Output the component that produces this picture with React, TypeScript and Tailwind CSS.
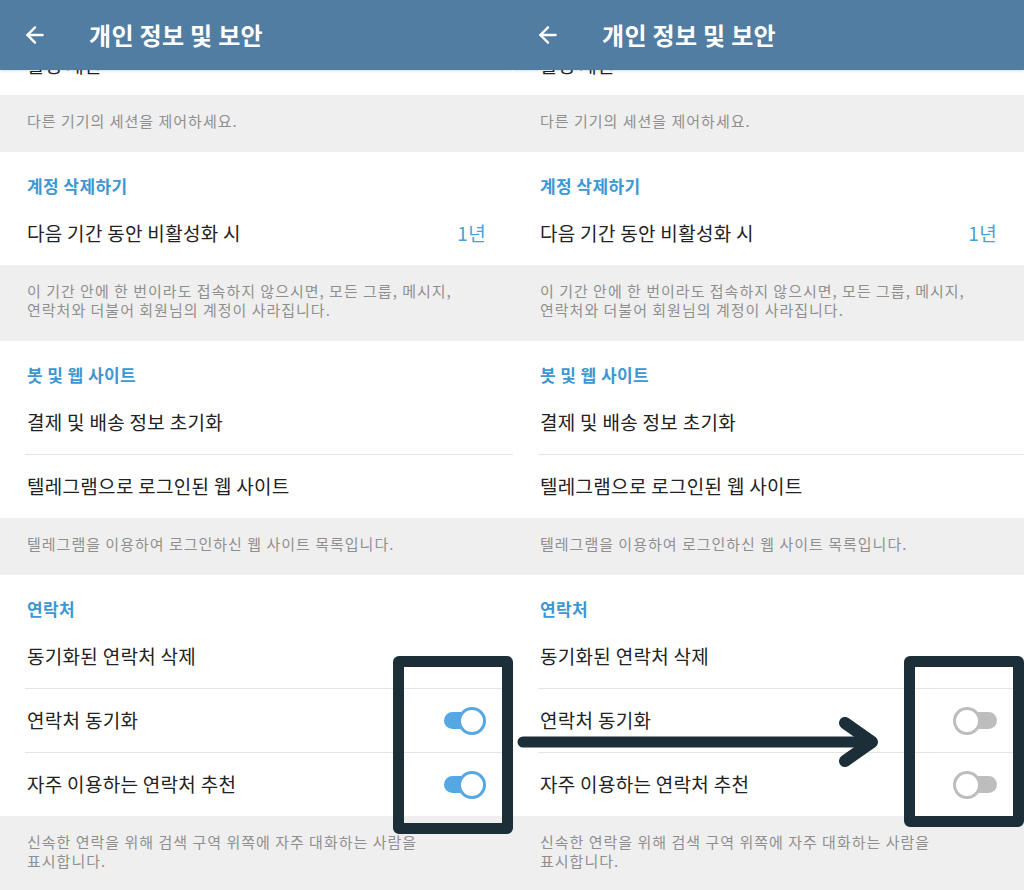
import { ArrowLeft } from 'lucide-react'

const font = { fontFamily: '"Noto Sans CJK KR", Roboto, sans-serif' }

function Toggle({ on }: { on: boolean }) {
  if (on) {
    return (
      <div className="relative w-[42px] h-[28px] flex items-center">
        <div className="w-[40px] h-[17px] rounded-full bg-[#55a8e4]" />
        <div className="absolute right-0 top-0 w-[28px] h-[28px] rounded-full bg-white border-[3px] border-[#55a8e4]" />
      </div>
    )
  }
  return (
    <div className="relative w-[44px] h-[28px] flex items-center justify-end">
      <div className="w-[40px] h-[17px] rounded-full bg-[#bdbdbd]" />
      <div className="absolute left-0 top-0 w-[28px] h-[28px] rounded-full bg-white border-[3px] border-[#bdbdbd]" />
    </div>
  )
}

function Header({ title }: { title: string }) {
  return (
    <div className="h-[50px] pt-[24px] pl-[27px] text-[17px] leading-[20px] tracking-[0.4px] font-semibold text-[#3c97d3]">
      {title}
    </div>
  )
}

function Row({ label, value, toggle, divider }: { label: string; value?: string; toggle?: boolean; divider?: boolean }) {
  return (
    <div>
      <div className="h-[63px] pl-[27px] pr-[27px] flex items-center justify-between text-[19px] tracking-[0.3px] text-[#222222]">
        <span>{label}</span>
        {value && <span className="text-[#4aa0d8]">{value}</span>}
        {toggle !== undefined && <Toggle on={toggle} />}
      </div>
      {divider && <div className="ml-[25px] h-px bg-[#e4e4e4]" />}
    </div>
  )
}

function Info({ children, last }: { children: React.ReactNode; last?: boolean }) {
  return (
    <div className={'bg-[#efefef] pl-[27px] pr-[20px] pt-[16px] text-[15px] leading-[19px] tracking-[1px] text-[#8f8f8f] whitespace-nowrap ' + (last ? 'pb-[40px]' : 'pb-[22px]')}>
      {children}
    </div>
  )
}

function Panel({ on, width }: { on: boolean; width: string }) {
  return (
    <div className={'h-[890px] overflow-hidden bg-white flex flex-col ' + width} style={font}>
      <div className="h-[70px] shrink-0 bg-[#517da2] flex items-center pl-[22px] z-10 shadow-sm">
        <ArrowLeft className="w-[26px] h-[26px] text-white" strokeWidth={2.2} />
        <span className="ml-[41px] text-[24px] font-semibold tracking-[0.3px] text-white">개인 정보 및 보안</span>
      </div>
      <div className="h-[25px] shrink-0 overflow-hidden bg-white">
        <div className="mt-[-17px] pl-[27px] text-[19px] leading-[24px] text-[#222222]">활성 세션</div>
      </div>
      <Info>다른 기기의 세션을 제어하세요.</Info>
      <div className="bg-white">
        <Header title="계정 삭제하기" />
        <Row label="다음 기간 동안 비활성화 시" value="1년" />
      </div>
      <Info>
        이 기간 안에 한 번이라도 접속하지 않으시면, 모든 그룹, 메시지,
        <br />
        연락처와 더불어 회원님의 계정이 사라집니다.
      </Info>
      <div className="bg-white">
        <Header title="봇 및 웹 사이트" />
        <Row label="결제 및 배송 정보 초기화" divider />
        <Row label="텔레그램으로 로그인된 웹 사이트" />
      </div>
      <Info>텔레그램을 이용하여 로그인하신 웹 사이트 목록입니다.</Info>
      <div className="bg-white">
        <Header title="연락처" />
        <Row label="동기화된 연락처 삭제" divider />
        <Row label="연락처 동기화" toggle={on} divider />
        <Row label="자주 이용하는 연락처 추천" toggle={on} />
      </div>
      <Info last>
        신속한 연락을 위해 검색 구역 위쪽에 자주 대화하는 사람을
        <br />
        표시합니다.
      </Info>
    </div>
  )
}

export default function App() {
  return (
    <div className="relative w-[1024px] h-[890px] overflow-hidden bg-white flex">
      <Panel on width="w-[513px]" />
      <Panel on={false} width="w-[511px]" />

      {/* annotation overlays */}
      <div className="absolute left-[393px] top-[656px] w-[120px] h-[178px] border-[11px] border-[#1c2e37] rounded-[6px]" />
      <div className="absolute left-[904px] top-[656px] w-[120px] h-[171px] border-[11px] border-[#1c2e37] rounded-[6px]" />
      <svg className="absolute left-[512px] top-[715px]" width="372" height="54" viewBox="0 0 372 54">
        <path d="M11 27 H356" stroke="#1c2e37" strokeWidth="11" strokeLinecap="round" fill="none" />
        <path d="M333 8 L360 27 L333 46" stroke="#1c2e37" strokeWidth="12" strokeLinecap="round" strokeLinejoin="round" fill="none" />
      </svg>
    </div>
  )
}
